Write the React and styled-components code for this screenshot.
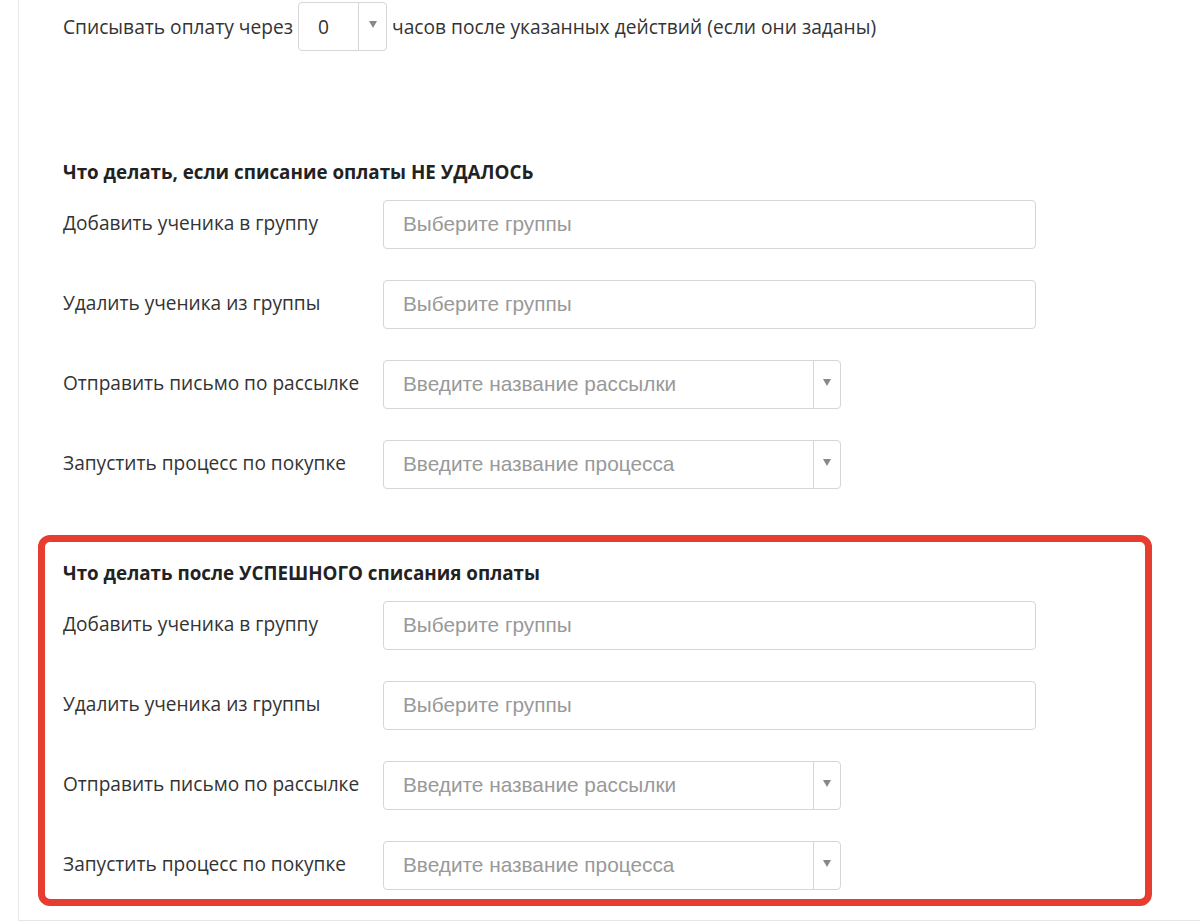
import React from "react";
import styled, { createGlobalStyle } from "styled-components";

const Global = createGlobalStyle`
  html, body { margin: 0; padding: 0; background: #fff; }
  body { font-family: "Open Sans", "Liberation Sans", sans-serif; color: #333; overflow: hidden; }
  *, *::before, *::after { box-sizing: border-box; }
`;

const Panel = styled.div`
  margin-left: 18px;
  width: calc(100vw - 18px);
  border-left: 1px solid #e6e6e6;
  border-bottom: 1px solid #e6e6e6;
  padding: 2px 0 31px 44px;
`;

const TopRow = styled.div`
  display: flex;
  align-items: center;
  gap: 5px;
  height: 48px;
  font-size: 19.2px;
  color: #333;
`;

const Section = styled.section`
  position: relative;
  margin-top: ${(p) => p.$mt}px;
  display: flex;
  flex-direction: column;
  gap: 32px;
  ${(p) =>
    p.$highlight &&
    `
    &::before {
      content: "";
      position: absolute;
      top: -26px;
      left: -25px;
      width: 1114px;
      bottom: -17px;
      border: 7px solid #e63d30;
      border-radius: 12px;
      pointer-events: none;
    }
  `}
`;

const Heading = styled.h3`
  margin: 0 0 -16px;
  font-size: 18.8px;
  line-height: 24px;
  font-weight: 700;
  color: #222;
`;

const Row = styled.div`
  display: flex;
  align-items: center;
  height: 48px;
`;

const Label = styled.div`
  width: 320px;
  font-size: 19.1px;
  color: #333;
  margin-top: -3px;
`;

const Box = styled.div`
  display: flex;
  align-items: stretch;
  width: ${(p) => p.$w}px;
  height: ${(p) => p.$h || 49}px;
  border: 1px solid #d6d6d6;
  border-radius: 4px;
  background: #fff;
`;

const Field = styled.div`
  flex: 1;
  display: flex;
  align-items: center;
  padding-left: ${(p) => p.$pl || 19}px;
  font-size: ${(p) => (p.$value ? "19.2px" : "20.8px")};
  font-family: ${(p) => (p.$value ? `"Open Sans", sans-serif` : `"Liberation Sans", Arial, sans-serif`)};
  color: ${(p) => (p.$value ? "#333" : "#999")};
`;

const Caret = styled.div`
  width: ${(p) => p.$w || 27}px;
  border-left: 1px solid #d6d6d6;
  display: flex;
  align-items: center;
  justify-content: center;
  padding-bottom: 3px;
  &::after {
    content: "";
    border-left: 4.5px solid transparent;
    border-right: 4.5px solid transparent;
    border-top: 7px solid #888;
  }
`;

const GroupInput = () => (
  <Box $w={653}>
    <Field>Выберите группы</Field>
  </Box>
);

const SelectInput = ({ placeholder }) => (
  <Box $w={458}>
    <Field>{placeholder}</Field>
    <Caret />
  </Box>
);

const ActionRows = () => (
  <>
    <Row>
      <Label>Добавить ученика в группу</Label>
      <GroupInput />
    </Row>
    <Row>
      <Label>Удалить ученика из группы</Label>
      <GroupInput />
    </Row>
    <Row>
      <Label>Отправить письмо по рассылке</Label>
      <SelectInput placeholder="Введите название рассылки" />
    </Row>
    <Row>
      <Label>Запустить процесс по покупке</Label>
      <SelectInput placeholder="Введите название процесса" />
    </Row>
  </>
);

export default function App() {
  return (
    <>
      <Global />
      <Panel>
        <TopRow>
          <span>Списывать оплату через</span>
          <Box $w={89} $h={49}>
            <Field $value $pl={19}>0</Field>
            <Caret $w={28} />
          </Box>
          <span>часов после указанных действий (если они заданы)</span>
        </TopRow>
        <Section $mt={110}>
          <Heading>Что делать, если списание оплаты НЕ УДАЛОСЬ</Heading>
          <ActionRows />
        </Section>
        <Section $mt={73} $highlight>
          <Heading>Что делать после УСПЕШНОГО списания оплаты</Heading>
          <ActionRows />
        </Section>
      </Panel>
    </>
  );
}
